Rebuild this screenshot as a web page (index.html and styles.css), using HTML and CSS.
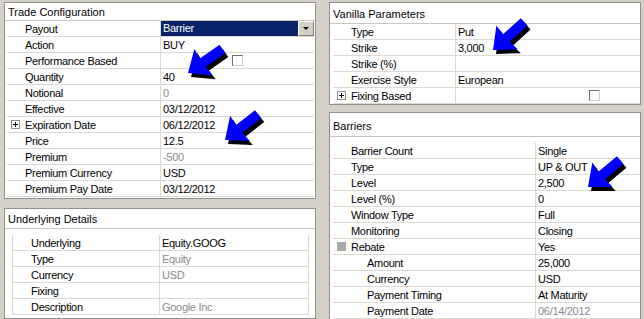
FILE: index.html
```html
<!DOCTYPE html>
<html lang="en">
<head>
    <meta charset="UTF-8">
    <title>Trade Configuration</title>
    <link rel="stylesheet" href="styles.css">
</head>
<body>
<div class="screen">
    <div class="col">
        <section class="panel panel-trade">
            <h3 class="panel-title">Trade Configuration</h3>
            <div class="grid">
                <div class="row"><span class="name"><i class="gutter"></i>Payout</span><span class="value value-combo"><span class="combo-text">Barrier</span><span class="combo-btn"></span></span></div>
                <div class="row"><span class="name"><i class="gutter"></i>Action</span><span class="value">BUY</span></div>
                <div class="row"><span class="name"><i class="gutter"></i>Performance Based</span><span class="value"><span class="check check-trade"></span></span></div>
                <div class="row"><span class="name"><i class="gutter"></i>Quantity</span><span class="value">40</span></div>
                <div class="row"><span class="name"><i class="gutter"></i>Notional</span><span class="value dim">0</span></div>
                <div class="row"><span class="name"><i class="gutter"></i>Effective</span><span class="value">03/12/2012</span></div>
                <div class="row"><span class="name"><i class="gutter"><b class="box plus"></b></i>Expiration Date</span><span class="value">06/12/2012</span></div>
                <div class="row"><span class="name"><i class="gutter"></i>Price</span><span class="value">12.5</span></div>
                <div class="row"><span class="name"><i class="gutter"></i>Premium</span><span class="value dim">-500</span></div>
                <div class="row"><span class="name"><i class="gutter"></i>Premium Currency</span><span class="value">USD</span></div>
                <div class="row"><span class="name"><i class="gutter"></i>Premium Pay Date</span><span class="value">03/12/2012</span></div>
            </div>
        </section>

        <section class="panel panel-under">
            <h3 class="panel-title">Underlying Details</h3>
            <div class="grid">
                <div class="row"><span class="name"><i class="gutter"></i>Underlying</span><span class="value">Equity.GOOG</span></div>
                <div class="row"><span class="name"><i class="gutter"></i>Type</span><span class="value dim">Equity</span></div>
                <div class="row"><span class="name"><i class="gutter"></i>Currency</span><span class="value dim">USD</span></div>
                <div class="row"><span class="name"><i class="gutter"></i>Fixing</span><span class="value"></span></div>
                <div class="row"><span class="name"><i class="gutter"></i>Description</span><span class="value dim">Google Inc</span></div>
            </div>
        </section>
    </div>

    <div class="col">
        <section class="panel panel-vanilla">
            <h3 class="panel-title">Vanilla Parameters</h3>
            <div class="grid">
                <div class="row"><span class="name"><i class="gutter"></i>Type</span><span class="value">Put</span></div>
                <div class="row"><span class="name"><i class="gutter"></i>Strike</span><span class="value">3,000</span></div>
                <div class="row"><span class="name"><i class="gutter"></i>Strike (%)</span><span class="value"></span></div>
                <div class="row"><span class="name"><i class="gutter"></i>Exercise Style</span><span class="value">European</span></div>
                <div class="row"><span class="name"><i class="gutter"><b class="box plus"></b></i>Fixing Based</span><span class="value"><span class="check check-vanilla"></span></span></div>
            </div>
        </section>

        <section class="panel panel-barrier">
            <h3 class="panel-title">Barriers</h3>
            <div class="grid">
                <div class="row"><span class="name"><i class="gutter"></i>Barrier Count</span><span class="value">Single</span></div>
                <div class="row"><span class="name"><i class="gutter"></i>Type</span><span class="value">UP &amp; OUT</span></div>
                <div class="row"><span class="name"><i class="gutter"></i>Level</span><span class="value">2,500</span></div>
                <div class="row"><span class="name"><i class="gutter"></i>Level (%)</span><span class="value">0</span></div>
                <div class="row"><span class="name"><i class="gutter"></i>Window Type</span><span class="value">Full</span></div>
                <div class="row"><span class="name"><i class="gutter"></i>Monitoring</span><span class="value">Closing</span></div>
                <div class="row"><span class="name"><i class="gutter"><b class="box minus"></b></i>Rebate</span><span class="value">Yes</span></div>
                <div class="row sub"><span class="name"><i class="gutter"></i>Amount</span><span class="value">25,000</span></div>
                <div class="row sub"><span class="name"><i class="gutter"></i>Currency</span><span class="value">USD</span></div>
                <div class="row sub"><span class="name"><i class="gutter"></i>Payment Timing</span><span class="value">At Maturity</span></div>
                <div class="row sub"><span class="name"><i class="gutter"></i>Payment Date</span><span class="value dim">06/14/2012</span></div>
            </div>
        </section>
    </div>

    <!-- callout arrows drawn over the grids -->
    <svg class="arrows" width="644" height="319" viewBox="0 0 644 319">
        <defs>
            <polygon id="arrow" points="0,0 19,-16 18,-5 42,-5 42,5 18,5 19,16"/>
        </defs>
        <g transform="translate(191,77) rotate(-35)"><use href="#arrow" fill="#000"/></g>
        <g transform="translate(188,73) rotate(-35)"><use href="#arrow" fill="#0000ff"/></g>
        <g transform="translate(228,144) rotate(-38)"><use href="#arrow" fill="#000"/></g>
        <g transform="translate(225,140) rotate(-38)"><use href="#arrow" fill="#0000ff"/></g>
        <g transform="translate(496,54) rotate(-42)"><use href="#arrow" fill="#000"/></g>
        <g transform="translate(493,50) rotate(-42)"><use href="#arrow" fill="#0000ff"/></g>
        <g transform="translate(591,191) rotate(-40)"><use href="#arrow" fill="#000"/></g>
        <g transform="translate(588,187) rotate(-40)"><use href="#arrow" fill="#0000ff"/></g>
    </svg>
</div>
</body>
</html>
```

FILE: styles.css
```css
body{margin:0;background:#d4d0c8;font-family:"Liberation Sans",Arial,sans-serif;font-size:11px;color:#000;}
h3{margin:0;}

.screen{
    position:relative;
    display:flex;
    gap:13px;
    width:644px;
    height:319px;
    padding:2px 0 0 4px;
    box-sizing:border-box;
    overflow:hidden;
}
.col{
    display:flex;
    flex-direction:column;
    flex:none;
    width:312px;
}

.panel{
    background:#fff;
    border:1px solid #8f8f8f;
    box-sizing:border-box;
}
.panel-title{
    padding-left:3px;
    font-size:11px;
    font-weight:normal;
    border-bottom:1px solid #c8c5be;
    box-sizing:border-box;
}

.row{
    display:flex;
    height:16px;
    line-height:16px;
    border-bottom:1px solid #dcd9d2;
    box-sizing:border-box;
    white-space:nowrap;
    letter-spacing:-0.3px;
}
.name{
    display:flex;
    align-items:center;
    flex:none;
    padding-left:4px;
    box-sizing:border-box;
}
.gutter{
    display:flex;
    align-items:center;
    width:14px;
    height:15px;
}
.row.sub .name{padding-left:20px;}
.value{
    flex:1;
    padding-left:2px;
    border-left:1px solid #dcd9d2;
    overflow:hidden;
}
.dim{color:#8a8a8a;}

/* expand / collapse boxes */
.box{
    position:relative;
    display:block;
    width:9px;
    height:9px;
    border:1px solid #8f8f8f;
    box-sizing:border-box;
    background:#fff;
}
.box.plus::before,.box.plus::after{
    content:"";
    position:absolute;
    background:#000;
}
.box.plus::before{left:1px;top:3px;width:5px;height:1px;}
.box.plus::after{left:3px;top:1px;width:1px;height:5px;}
.box.minus{background:#a9a9a9;border-color:#a9a9a9;}

/* combo box */
.value-combo{
    display:flex;
    padding-left:0;
    height:15px;
    line-height:15px;
}
.combo-text{
    flex:1;
    padding-left:2px;
    background:#0a246a;
    color:#fff;
}
.combo-btn{
    position:relative;
    width:16px;
    height:15px;
    box-sizing:border-box;
    background:#d4d0c8;
    border:1px solid;
    border-color:#fff #808080 #808080 #fff;
}
.combo-btn::after{
    content:"";
    position:absolute;
    left:4px;
    top:5px;
    border:3px solid transparent;
    border-top:3px solid #000;
    border-bottom:0;
}

.check{
    display:inline-block;
    width:11px;
    height:11px;
    box-sizing:border-box;
    border:1px solid;
    border-color:#6e6e6e #d4d0c8 #d4d0c8 #6e6e6e;
    background:#fff;
    vertical-align:middle;
}
.check-trade{margin:-4px 0 0 69px;}
.check-vanilla{margin:-4px 0 0 131px;}

/* Trade Configuration */
.panel-trade{height:197px;}
.panel-trade .panel-title{height:18px;line-height:18px;}
.panel-trade .grid{margin:0 1px 0 2px;}
.panel-trade .name{width:153px;}

/* Underlying Details */
.panel-under{flex:1;margin-top:9px;}
.panel-under .panel-title{height:20px;line-height:21px;}
.panel-under .grid{margin:6px 6px 0 7px;border-left:1px solid #dcd9d2;border-right:1px solid #dcd9d2;}
.panel-under .name{width:146px;}

/* Vanilla Parameters */
.panel-vanilla{height:106px;}
.panel-vanilla .panel-title{height:21px;line-height:22px;}
.panel-vanilla .grid{margin:0 0 0 3px;}
.panel-vanilla .name{width:122px;}

/* Barriers */
.panel-barrier{flex:1;margin-top:7px;}
.panel-barrier .panel-title{height:24px;line-height:26px;}
.panel-barrier .grid{margin:6px 0 0 3px;}
.panel-barrier .name{width:202px;}

.arrows{
    position:absolute;
    left:0;
    top:0;
    pointer-events:none;
}
```
